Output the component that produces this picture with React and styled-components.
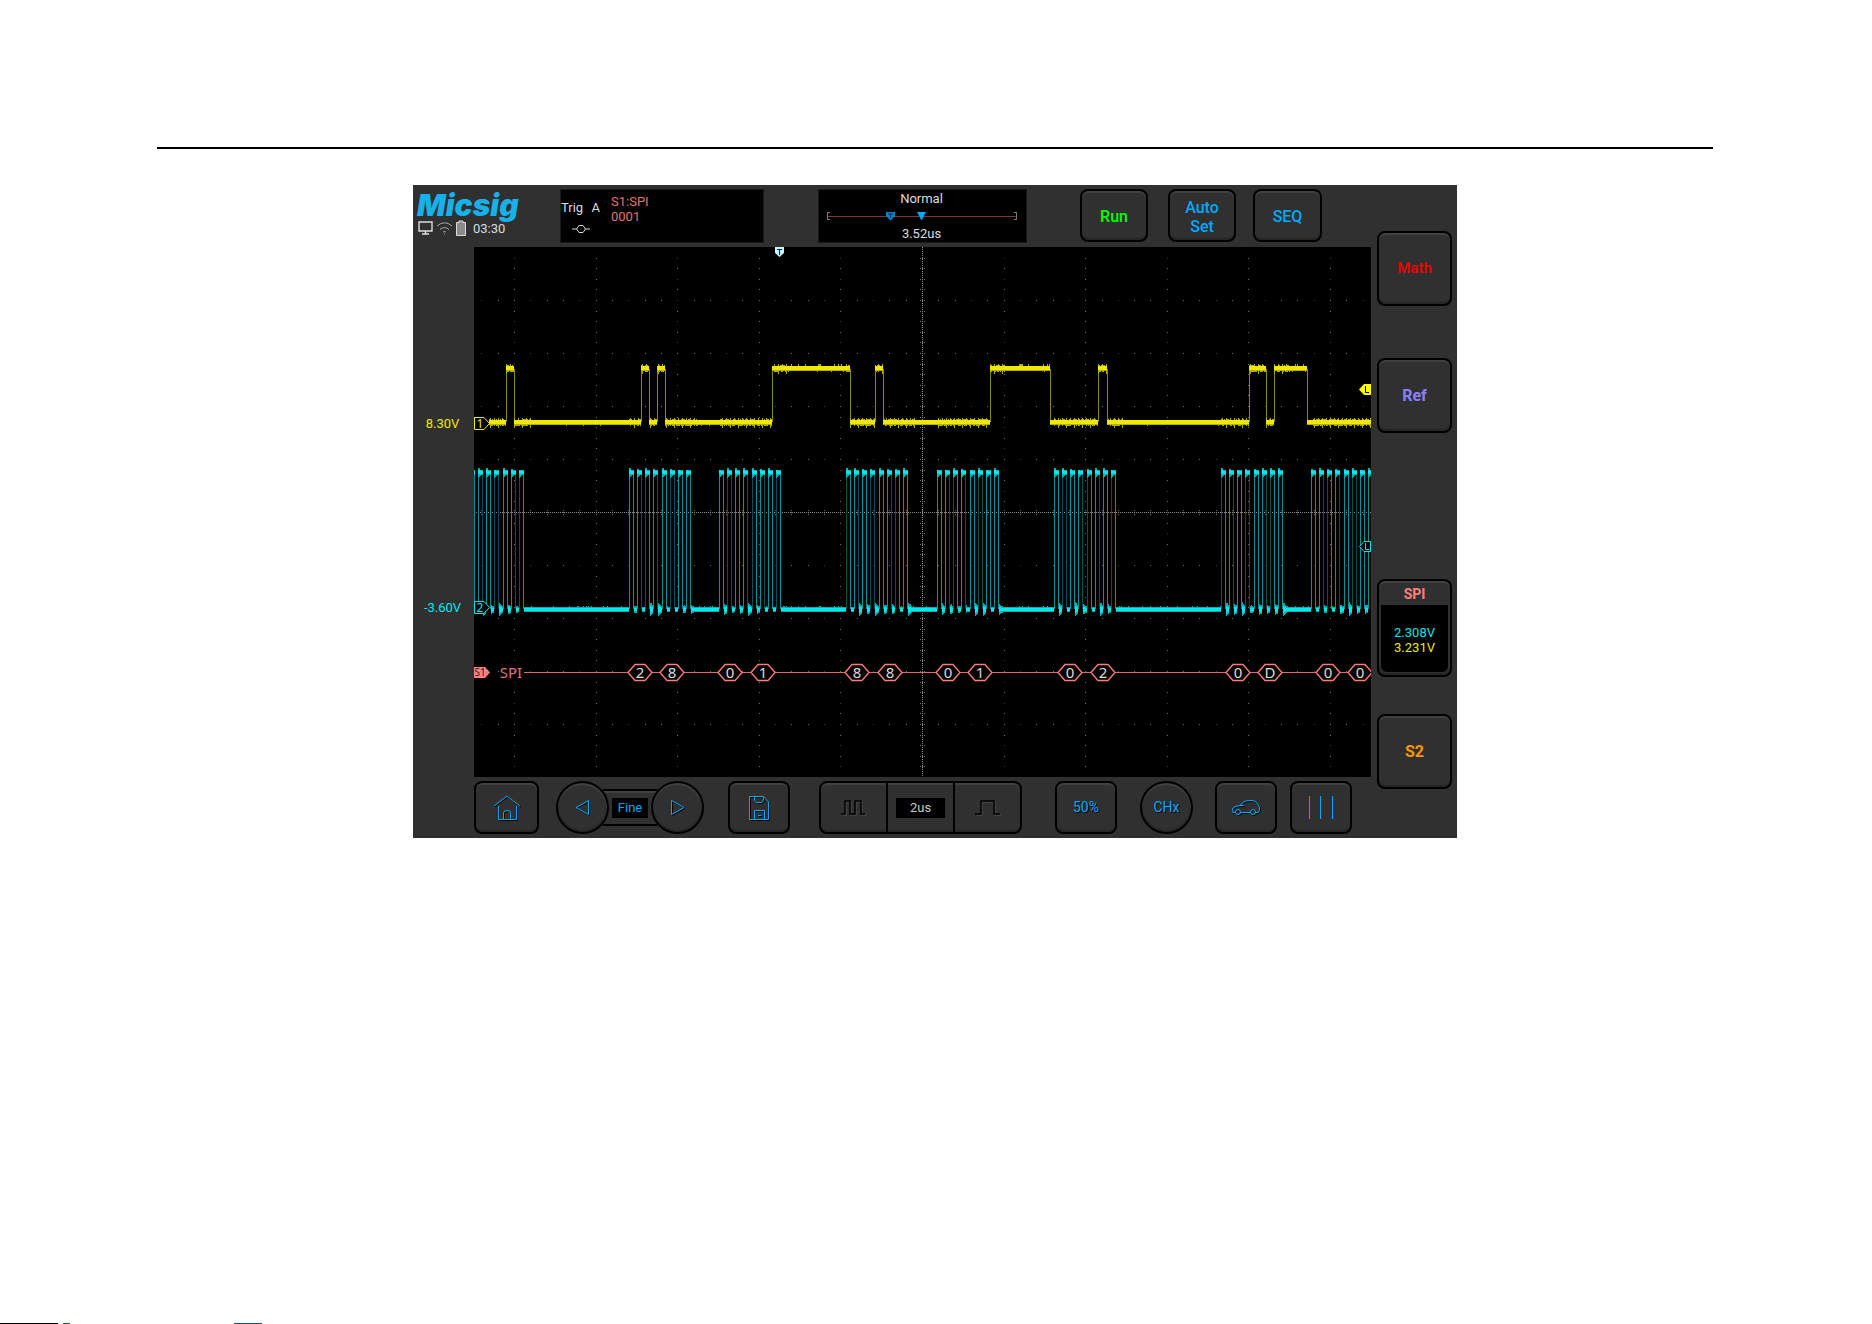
import React from "react";
import styled, { createGlobalStyle } from "styled-components";

const YELLOW = "#f0e800";
const CYAN = "#00e8ee";
const BLUE = "#00a8ff";
const SALMON = "#ff8080";

// waveform data, in screen pixels
const DATA_PULSES = [
  [32, 40], [167, 175], [183, 191], [298, 376], [401, 409],
  [516, 576], [624, 633], [775, 792], [800, 833],
];
const CLOCK_BURSTS = [
  { start: -4, count: 7 },
  { start: 155, count: 8 },
  { start: 245, count: 8 },
  { start: 372, count: 8 },
  { start: 463, count: 8 },
  { start: 580, count: 8 },
  { start: 747, count: 8 },
  { start: 837, count: 8 },
];
const FRAMES = [
  [166, "2"], [198, "8"], [256, "0"], [289, "1"], [383, "8"],
  [416, "8"], [474, "0"], [506, "1"], [596, "0"], [629, "2"],
  [764, "0"], [796, "D"], [854, "0"], [886, "0"],
];

const noise = (n) => {
  const v = Math.sin(n * 127.1 + 11.7) * 43758.5453;
  return v - Math.floor(v);
};

const inBurst = (x) =>
  CLOCK_BURSTS.some((b) => x >= b.start && x <= b.start + b.count * 8 + 4);

const column = (x, top, bottom) => `M${x + 0.5} ${top}V${bottom}`;

function buildGrid() {
  let strong = "";
  let weak = "";
  const dot = (x, y) => `M${Math.round(x)} ${Math.round(y) + 0.5}h1`;
  for (let c = -5; c <= 5; c++) {
    const x = 448 + c * 81.6;
    for (let r = -24; r <= 24; r++) {
      if ((c + 6) % 2 === 0 || r % 2 !== 0) strong += dot(x, 265 + r * 10.6);
      else weak += dot(x, 265 + r * 10.6);
    }
  }
  for (let r = -4; r <= 4; r++) {
    for (let c = -27; c <= 27; c++) {
      if (c % 3 === 0) weak += dot(448 + c * 16.32, 265 + r * 53);
      else strong += dot(448 + c * 16.32, 265 + r * 53);
    }
  }
  // small ticks along the centre axes
  for (let c = -27; c <= 27; c++) {
    strong += dot(448 + c * 16.32, 263) + dot(448 + c * 16.32, 267);
  }
  for (let r = -24; r <= 24; r++) {
    strong += dot(446, 265 + r * 10.6) + dot(450, 265 + r * 10.6);
  }
  return { strong, weak };
}

function buildData() {
  let core = "";
  let fuzz = "";
  let edges = "";
  for (let x = 15; x < 897; x++) {
    const high = DATA_PULSES.find((p) => x >= p[0] && x < p[1]);
    const y = high ? 121 : 175;
    const busy = inBurst(x) || (high && x - high[0] < 10);
    const up = busy ? Math.floor(noise(x) * 2) : noise(x) > 0.8 && high ? 2 : 0;
    const down = busy ? Math.floor(noise(x + 900) * 2) : noise(x + 3) > 0.95 ? 1 : 0;
    core += column(x, y - 2, y + 2);
    fuzz += column(x, y - 2 - up, y + 3 + down);
    if (busy && x % 4 === 0) fuzz += column(x, y - 4, y + 4);
    if (busy && x % 8 === 0) fuzz += column(x, y - 4, y + 6);
  }
  DATA_PULSES.forEach(([a, b]) => {
    edges += column(a, 122, 175) + column(b, 122, 175);
  });
  return { core, fuzz, edges };
}

function buildClock() {
  let core = "";
  let fuzz = "";
  let bright = "";
  let dim = "";
  const highs = [];
  CLOCK_BURSTS.forEach((b, n) => {
    for (let i = 0; i < b.count; i++) {
      const a = b.start + Math.round(i * 8.15);
      highs.push([a, a + 4]);
      if ((i + n) % 3 === 0) dim += column(a, 226, 362);
      else bright += column(a, 226, 362);
      if (i % 2 === 0 || i === b.count - 1) bright += column(a + 4, 226, 362);
      else dim += column(a + 4, 226, 362);
    }
  });
  for (let x = 0; x < 897; x++) {
    const high = highs.find((h) => x >= h[0] && x <= h[1]);
    if (high) {
      const near = 4 - (x - high[0]);
      core += column(x, x - high[0] < 2 ? 223 : 224, 227);
      fuzz += column(x, 223 - (near > 2 ? Math.floor(noise(high[0]) * 3) : 0), 228 + Math.max(0, near - 1));
      continue;
    }
    const last = highs.filter((h) => h[1] < x).pop();
    const since = last ? x - last[1] : 99;
    const ring = since < 5 ? Math.floor((6 - since) * noise(last[1] + 5)) : 0;
    core += column(x, 361 - Math.floor(ring / 2), 364 + Math.floor(ring / 2));
    fuzz += column(x, 360 - ring - (noise(x) > 0.85 ? 1 : 0), 365 + ring);
  }
  return { core, fuzz, bright, dim };
}

const grid = buildGrid();
const dataWave = buildData();
const clockWave = buildClock();

const ScopeScreen = () => (
  <Screen viewBox="0 0 897 530" role="img" aria-label="SPI waveforms">
    <g shapeRendering="crispEdges" fill="none">
      <path d={grid.weak} stroke="#3c3c3c" />
      <path d={grid.strong} stroke="#707070" />
      <path d="M448.5 0V530M0 265.5H897" stroke="#8c8c8c" strokeDasharray="1 1" />
      <path d={dataWave.edges} stroke="#8c8800" />
      <path d={dataWave.fuzz} stroke="#b4ae00" />
      <path d={dataWave.core} stroke={YELLOW} />
      <path d={clockWave.dim} stroke="#005254" />
      <path d={clockWave.bright} stroke="#009496" />
      <path d={clockWave.fuzz} stroke="#00b0b4" />
      <path d={clockWave.core} stroke={CYAN} />
    </g>

    <path d="M0 170.5H10L15.5 176.5L10 182.5H0.5V170.5" fill="#000" stroke={YELLOW} />
    <MarkText x="6" y="181" fill={YELLOW}>1</MarkText>
    <path d="M0 354.5H10L15.5 360.5L10 366.5H0.5V354.5" fill="#000" stroke={CYAN} />
    <MarkText x="6" y="365" fill={CYAN}>2</MarkText>

    <path d="M50 425.5H897" stroke="#e06a6a" />
    <path d="M0 420H11L16 425.5L11 431H0Z" fill={SALMON} />
    <MarkText x="6" y="429" $size={10} fill="#401010">S1</MarkText>
    <BusText x="37" y="431" textAnchor="middle" fill="#e07474">SPI</BusText>
    {FRAMES.map(([x, value]) => (
      <g key={x}>
        <path
          d={`M${x - 12} 425.5L${x - 5} 417.5H${x + 5}L${x + 12} 425.5L${x + 5} 433.5H${x - 5}Z`}
          fill="#000"
          stroke="#ff7c7c"
          strokeWidth="1.3"
        />
        <BusText x={x} y="431" textAnchor="middle" fill="#dcdcdc">{value}</BusText>
      </g>
    ))}

    <path d="M301 0H310V6L305.5 10L301 6Z" fill="#c4f4ff" />
    <path d="M303 2.5H308M305.5 2V8" stroke="#002830" />
    <path d="M897 137H890L885 142.5L890 148H897Z" fill="#ffff00" />
    <path d="M891.5 139V145.5H895" stroke="#000" fill="none" />
    <path d="M896.5 294.5H890L885.5 299.5L890 304.5H896.5Z" fill="#000" stroke={CYAN} />
    <path d="M891.5 296V302.5H895" stroke={CYAN} fill="none" />
  </Screen>
);

const HomeIcon = () => (
  <Icon width="28" height="26" viewBox="0 0 28 26">
    <path d="M1 11L14 1L27 11M5.5 11V24.5H23.5V11M10.5 24V18Q10.5 15.5 14 15.5Q17.5 15.5 17.5 18V24" />
  </Icon>
);

const SaveIcon = () => (
  <Icon width="22" height="26" viewBox="0 0 22 26">
    <path d="M1.5 1.5H15.5L20.5 7V24.5H1.5ZM6.5 1.5V5L8.5 7.5H13.5L15.5 5V1.5M6.5 24.5V15.5H16.5V24.5M10 20.5H13" />
  </Icon>
);

const CarIcon = () => (
  <Icon width="30" height="18" viewBox="0 0 30 18">
    <path d="M4 13.5H2L1.5 9.5L4 7.5L9 6.5L13 2.5Q15 1.5 19 1.5H22Q25 2 27 5.5Q29 8 28.5 11L27 13.5H24.5M19 13.5H10M9 6.5H13" />
    <circle cx="7" cy="13" r="2.5" />
    <circle cx="22" cy="13" r="2.5" />
  </Icon>
);

const App = () => (
  <Page>
    <GlobalStyle />
    <Content>
      <Rule />
      <Device>
        <Main>
          <TopBar>
            <Brand>
              <Logo>Micsig</Logo>
              <Status>
                <StatusIcon width="15" height="14" viewBox="0 0 15 14">
                  <path d="M1 1H14V10H1ZM7.5 10V13M4 13H11" strokeWidth="1.4" />
                </StatusIcon>
                <StatusIcon width="17" height="14" viewBox="0 0 17 14">
                  <path d="M1 5Q8.5 -1.5 16 5M4 8.5Q8.5 4.5 13 8.5M7 11Q8.5 10 10 11M8 13H9" stroke="#a8a8a8" />
                </StatusIcon>
                <StatusIcon width="10" height="16" viewBox="0 0 10 16">
                  <path d="M.5 2.5H3V1H7V2.5H9.5V15.5H.5Z" fill="#8c8c8c" />
                </StatusIcon>
                <time>03:30</time>
              </Status>
            </Brand>
            <TriggerBox>
              <TriggerMode>
                <TriggerLabel>
                  <span>Trig</span>
                  <span>A</span>
                </TriggerLabel>
                <StatusIcon width="18" height="10" viewBox="0 0 18 10">
                  <path d="M0 5H4.5M13.5 5H18M4.5 5L7 1.5H11L13.5 5L11 8.5H7Z" />
                </StatusIcon>
              </TriggerMode>
              <TriggerSource>
                S1:SPI
                <br />
                0001
              </TriggerSource>
            </TriggerBox>
            <TimeBox>
              <span>Normal</span>
              <svg width="192" height="10" viewBox="0 0 192 10">
                <path d="M2 5.5H190" stroke="#7c3838" />
                <path d="M4 1.5H1.5V8.5H4M188 1.5H190.5V8.5H188" stroke="#808080" fill="none" />
                <path d="M60 1H69V5L64.5 9.5L60 5Z" fill="#0085cc" />
                <path d="M62 3H67M64.5 3V7" stroke="#002840" />
                <path d="M91 1H100L95.5 9.5Z" fill={BLUE} />
              </svg>
              <span>3.52us</span>
            </TimeBox>
            <TopButtons>
              <TopKey $w={68} $color="#00ff00">Run</TopKey>
              <TopKey $w={68} $before={20}>Auto<br />Set</TopKey>
              <TopKey $w={69} $before={17}>SEQ</TopKey>
            </TopButtons>
          </TopBar>

          <ScreenRow>
            <Levels>
              <Level $color={YELLOW}>8.30V</Level>
              <Level $color={CYAN}>-3.60V</Level>
            </Levels>
            <ScopeScreen />
          </ScreenRow>

          <BottomBar>
            <Key $w={65} aria-label="Home"><HomeIcon /></Key>
            <FineGroup>
              <Key $w={53} $round aria-label="Previous">
                <Icon width="15" height="17" viewBox="0 0 15 17"><path d="M13.5 1.5V15.5L1 8.5Z" /></Icon>
              </Key>
              <FineTrack><Readout $w={36} $color={BLUE}>Fine</Readout></FineTrack>
              <Key $w={53} $round aria-label="Next">
                <Icon width="15" height="17" viewBox="0 0 15 17"><path d="M1.5 1.5V15.5L14 8.5Z" /></Icon>
              </Key>
            </FineGroup>
            <Key $w={62} $before={24} aria-label="Save"><SaveIcon /></Key>
            <TimeBase>
              <TimeKey aria-label="Longer time base">
                <PulseIcon width="25" height="16" viewBox="0 0 25 16"><path d="M0 14H4V1H9V14H14V1H20V14H24" /></PulseIcon>
              </TimeKey>
              <TimeCell><Readout $w={49} $color="#c8c8c8">2us</Readout></TimeCell>
              <TimeKey aria-label="Shorter time base">
                <PulseIcon width="26" height="16" viewBox="0 0 26 16"><path d="M0 14H6V1H19V14H25" /></PulseIcon>
              </TimeKey>
            </TimeBase>
            <Key $w={62} $before={33} $thin>50%</Key>
            <Key $w={53} $before={23} $round $thin>CHx</Key>
            <Key $w={62} $before={22} aria-label="Automotive"><CarIcon /></Key>
            <Key $w={62} $before={13} aria-label="Menu">
              <svg width="26" height="24" viewBox="0 0 26 24"><path d="M1.5 0V23M12.5 0V23M24.5 0V23" stroke={BLUE} /></svg>
            </Key>
          </BottomBar>
        </Main>

        <Side>
          <SideKey $color="#f00000">Math</SideKey>
          <SideKey $before={52} $color="#8880ff" $bold>Ref</SideKey>
          <SpiKey>
            SPI
            <SpiValues>
              <Level $color={CYAN}>2.308V</Level>
              <Level $color={YELLOW}>3.231V</Level>
            </SpiValues>
          </SpiKey>
          <SideKey $before={37} $color="#ff9800" $bold>S2</SideKey>
        </Side>
      </Device>
    </Content>
    <FooterLine />
  </Page>
);

const GlobalStyle = createGlobalStyle`
  * {
    box-sizing: border-box;
  }
  body {
    margin: 0;
    background: #fff;
    font-family: Roboto, "Liberation Sans", sans-serif;
    font-size: 13px;
  }
`;

const Page = styled.div`
  display: flex;
  flex-direction: column;
  min-height: 100vh;
`;

const Content = styled.main`
  padding: 147px 159px 0 157px;
`;

const Rule = styled.hr`
  height: 2px;
  margin: 0 0 36px;
  border: none;
  background: #000;
`;

const Device = styled.section`
  display: flex;
  width: 100%;
  max-width: 1044px;
  margin: 0 auto;
  background: #303030;
`;

const Main = styled.div`
  flex: 1;
  min-width: 0;
`;

const TopBar = styled.header`
  display: flex;
  height: 62px;
  padding: 4px 0 4px 4px;
`;

const Brand = styled.div`
  width: 143px;
  padding-top: 3px;
`;

const Logo = styled.div`
  color: #18b0e8;
  font-family: Inter, "Liberation Sans", sans-serif;
  font-size: 30px;
  font-style: italic;
  font-weight: 900;
  line-height: 26px;
`;

const Status = styled.div`
  display: flex;
  align-items: center;
  gap: 3px;
  height: 16px;
  margin-top: 2px;
  padding-left: 1px;
  color: #dcdcdc;

  time {
    margin-left: 4px;
  }
`;

const StatusIcon = styled.svg`
  flex: none;
  fill: none;
  stroke: #dcdcdc;
`;

const TriggerBox = styled.div`
  display: flex;
  width: 204px;
  height: 54px;
  background: #000;
  border: 1px solid #1a1a1a;
`;

const TriggerMode = styled.div`
  display: flex;
  flex-direction: column;
  align-items: center;
  width: 39px;
  padding-top: 10px;
  gap: 8px;
  color: #dcdcdc;
  line-height: 16px;
`;

const TriggerLabel = styled.div`
  display: flex;
  justify-content: space-between;
  width: 100%;
`;

const TriggerSource = styled.div`
  padding: 4px 0 0 11px;
  color: #e87070;
  line-height: 15px;
`;

const TimeBox = styled.div`
  display: flex;
  flex-direction: column;
  align-items: center;
  justify-content: space-between;
  width: 209px;
  height: 54px;
  margin-left: 54px;
  padding: 1px 2px 1px 0;
  background: #000;
  border: 1px solid #1a1a1a;
  color: #dcdcdc;
  line-height: 15px;
`;

const TopButtons = styled.div`
  display: flex;
  margin-left: 53px;
`;

const Key = styled.button`
  display: flex;
  flex: none;
  align-items: center;
  justify-content: center;
  width: ${(props) => props.$w}px;
  height: 53px;
  margin: 0 0 0 ${(props) => props.$before || 0}px;
  padding: 0;
  background: #303030;
  border: 2px solid #000;
  border-radius: ${(props) => (props.$round ? "50%" : "8px")};
  box-shadow: inset 0 2px 1px #424242, inset 0 -2px 1px #262626;
  color: ${(props) => props.$color || BLUE};
  font-family: inherit;
  font-size: ${(props) => (props.$thin ? 14 : 16)}px;
  font-weight: ${(props) => (props.$thin ? 400 : 500)};
  line-height: 19px;
  text-shadow: ${(props) => (props.$thin ? "1px 1px 0 #000" : "none")};
  cursor: pointer;
`;

const TopKey = styled(Key)`
  padding-top: 2px;
`;

const ScreenRow = styled.div`
  display: flex;
`;

const Levels = styled.div`
  display: flex;
  flex: none;
  flex-direction: column;
  gap: 169px;
  width: 61px;
  padding: 169px 2px 0 0;
  text-align: center;
`;

const Level = styled.span`
  color: ${(props) => props.$color};
  font-size: 13px;
  font-weight: 400;
  line-height: 15px;
`;

const Screen = styled.svg`
  display: block;
  flex: 1;
  min-width: 0;
  background: #000;
`;

const MarkText = styled.text`
  font-family: "Noto Sans", sans-serif;
  font-size: ${(props) => props.$size || 12}px;
  text-anchor: middle;
`;

const BusText = styled.text`
  font-family: "Noto Sans", sans-serif;
  font-size: 15px;
`;

const BottomBar = styled.footer`
  display: flex;
  height: 61px;
  padding: 4px 0 0 61px;
`;

const FineGroup = styled.div`
  display: flex;
  align-items: center;
  height: 53px;
  margin-left: 17px;

  button {
    z-index: 1;
  }
`;

const FineTrack = styled.div`
  display: flex;
  align-items: center;
  justify-content: center;
  width: 54px;
  height: 37px;
  margin: 0 -6px;
  background: #303030;
  border: solid #000;
  border-width: 2px 0;
  box-shadow: inset 0 2px 1px #424242;
`;

const Readout = styled.span`
  width: ${(props) => props.$w}px;
  background: #000;
  color: ${(props) => props.$color};
  font-size: 13px;
  line-height: 20px;
  text-align: center;
`;

const TimeBase = styled.div`
  display: flex;
  width: 203px;
  height: 53px;
  margin-left: 29px;
  border: 2px solid #000;
  border-radius: 8px;
  box-shadow: inset 0 2px 1px #424242, inset 0 -2px 1px #262626;
`;

const TimeKey = styled.button`
  display: flex;
  flex: 1;
  align-items: center;
  justify-content: center;
  padding: 0;
  background: none;
  border: none;
  cursor: pointer;
`;

const TimeCell = styled.div`
  display: flex;
  align-items: center;
  justify-content: center;
  width: 69px;
  border: solid #000;
  border-width: 0 2px;
`;

const Icon = styled.svg`
  fill: none;
  stroke: ${BLUE};
  filter: drop-shadow(1px 1px 0 #000);
`;

const PulseIcon = styled.svg`
  fill: none;
  stroke: #000;
  stroke-width: 1.5;
  filter: drop-shadow(1px 1px 0 #484848);
`;

const Side = styled.aside`
  display: flex;
  flex: none;
  flex-direction: column;
  align-items: center;
  width: 86px;
  padding: 46px 0 0 1px;
`;

const SideKey = styled(Key)`
  width: 75px;
  height: 75px;
  margin: ${(props) => props.$before || 0}px 0 0;
  font-size: ${(props) => (props.$bold ? 16 : 15)}px;
  font-weight: ${(props) => (props.$bold ? 700 : 500)};
`;

const SpiKey = styled(Key)`
  flex-direction: column;
  justify-content: space-between;
  width: 75px;
  height: 98px;
  margin: 146px 0 0;
  padding: 4px 2px 3px;
  color: ${SALMON};
  font-size: 14px;
  font-weight: 700;
`;

const SpiValues = styled.span`
  display: flex;
  flex-direction: column;
  justify-content: center;
  width: 100%;
  height: 67px;
  padding-top: 2px;
  background: #000;
  border-radius: 0 0 6px 6px;
`;

const FooterLine = styled.div`
  height: 1px;
  margin-top: auto;
  background: linear-gradient(
    90deg,
    #000 58px,
    #fff 58px 63px,
    #1c6040 63px 70px,
    #fff 70px 234px,
    #20506c 234px 262px,
    #fff 262px
  );
`;

export default App;
